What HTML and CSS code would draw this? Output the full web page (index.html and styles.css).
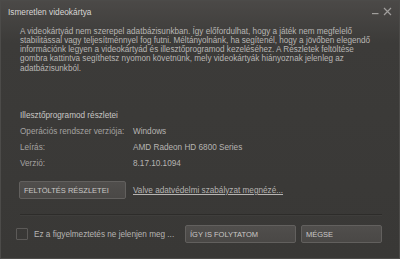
FILE: index.html
```html
<!DOCTYPE html>
<html lang="hu">
<head>
<meta charset="utf-8">
<link rel="stylesheet" href="styles.css">
</head>
<body>
<div class="dialog">
  <div class="titlebar">
    <span class="title">Ismeretlen videokártya</span>
    <div class="controls">
      <svg class="ctl" width="7" height="8" viewBox="0 0 7 8"><rect x="0" y="6" width="6.5" height="1.2" fill="#a09e9c"/></svg>
      <svg class="ctl" width="9" height="9" viewBox="0 0 9 9"><path d="M1 1L8 8M8 1L1 8" stroke="#a09e9c" stroke-width="1.2"/></svg>
    </div>
  </div>
  <p class="intro">A videokártyád nem szerepel adatbázisunkban. Így előfordulhat, hogy a játék nem megfelelő<br>stabilitással vagy teljesítménnyel fog futni. Méltányolnánk, ha segítenél, hogy a jövőben elegendő<br>információnk legyen a videokártyád és illesztőprogramod kezeléséhez. A Részletek feltöltése<br>gombra kattintva segíthetsz nyomon követnünk, mely videokártyák hiányoznak jelenleg az<br>adatbázisunkból.</p>
  <div class="details">
    <div class="heading">Illesztőprogramod részletei</div>
    <div class="row"><span class="label">Operációs rendszer verziója:</span><span class="value">Windows</span></div>
    <div class="row"><span class="label">Leírás:</span><span class="value">AMD Radeon HD 6800 Series</span></div>
    <div class="row"><span class="label">Verzió:</span><span class="value">8.17.10.1094</span></div>
  </div>
  <div class="actions">
    <button class="btn upload">FELTÖLTÉS RÉSZLETEI</button>
    <a class="link" href="#">Valve adatvédelmi szabályzat megnézé...</a>
  </div>
  <div class="sep"></div>
  <div class="footer">
    <label class="check"><span class="box"></span><span class="check-label">Ez a figyelmeztetés ne jelenjen meg ...</span></label>
    <button class="btn cont">ÍGY IS FOLYTATOM</button>
    <button class="btn cancel">MÉGSE</button>
  </div>
</div>
</body>
</html>
```
FILE: styles.css
```css
html, body {
  margin: 0;
  padding: 0;
  background: #383735;
}
.dialog {
  width: 400px;
  height: 259px;
  box-sizing: border-box;
  border: 1px solid #4c4b49;
  background: linear-gradient(#4b4947 0px, #3c3b39 42px, #393836 100%);
  font-family: "Liberation Sans", Arial, sans-serif;
  color: #b6b4b2;
  display: flex;
  flex-direction: column;
}
.titlebar {
  display: flex;
  align-items: center;
  justify-content: space-between;
  height: 22px;
  padding: 0 7px 0 7px;
}
.title {
  font-size: 8.3px;
  color: #d8d6d4;
}
.controls {
  display: flex;
  gap: 4px;
  align-items: center;
  margin-top: -2px;
}
.ctl { display: block; }
.intro {
  margin: 3.5px 0 0 19px;
  font-size: 8.15px;
  line-height: 9.25px;
  color: #b8b6b4;
}
.details {
  margin: 35px 0 0 19px;
  font-size: 8.2px;
}
.heading {
  color: #c8c6c4;
  height: 16px;
  line-height: 16px;
}
.row {
  display: flex;
  height: 16px;
  line-height: 16px;
  white-space: nowrap;
}
.label {
  flex: 0 0 113px;
  color: #a4a2a0;
}
.value {
  color: #b6b4b2;
}
.actions {
  display: flex;
  align-items: center;
  margin: 9.5px 0 0 18px;
}
.btn {
  box-sizing: border-box;
  font-family: "Liberation Sans", Arial, sans-serif;
  font-size: 7.5px;
  color: #cac8c6;
  background: linear-gradient(#504e4c, #4a4846);
  border: 1px solid #62605e;
  border-radius: 2px;
  text-align: left;
  padding: 0 4px;
  height: 18px;
  margin: 0;
  white-space: nowrap;
}
.upload { flex: 0 0 107px; width: 107px; }
.link {
  margin-left: 7px;
  font-size: 8.2px;
  color: #b6b4b2;
  text-decoration: underline;
  white-space: nowrap;
}
.sep {
  margin: 15px 17px 0 19px;
  height: 1px;
  background: #2d2c2a;
  border-bottom: 1px solid #3f3e3c;
}
.footer {
  display: flex;
  align-items: center;
  margin: 9px 0 0 15px;
}
.check {
  display: flex;
  align-items: center;
  gap: 6px;
  width: 169px;
  flex: 0 0 169px;
  min-width: 0;
}
.box {
  flex: 0 0 auto;
  box-sizing: border-box;
  width: 12px;
  height: 12px;
  border: 1px solid #5c5a58;
  border-radius: 1px;
}
.check-label {
  font-size: 8.2px;
  color: #b6b4b2;
  white-space: nowrap;
}
.cont { flex: 0 0 111px; width: 111px; }
.cancel { flex: 0 0 81px; width: 81px; margin-left: 5px; }
```
